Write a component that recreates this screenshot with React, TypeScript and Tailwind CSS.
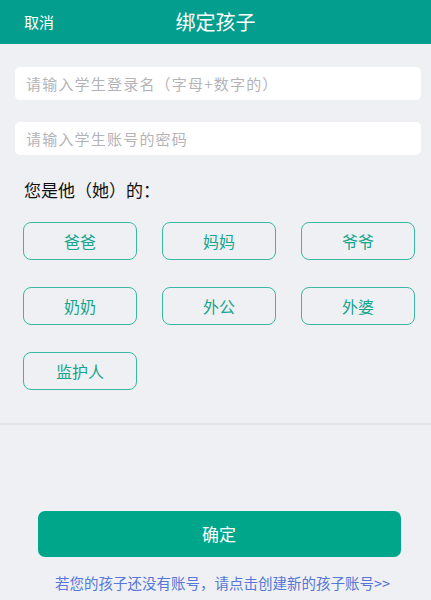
import React, { useState } from 'react';

const relations = ['爸爸', '妈妈', '爷爷', '奶奶', '外公', '外婆', '监护人'];

const App: React.FC = () => {
  const [picked, setPicked] = useState<string | null>(null);

  return (
    <div
      className="w-[431px] h-[600px] overflow-hidden bg-[#eef0f4] flex flex-col"
      style={{ fontFamily: '"Noto Sans CJK SC", "Noto Sans", sans-serif' }}
    >
      <div className="h-[44px] shrink-0 bg-[#049e8e] flex items-center relative">
        <button className="pl-[24px] text-[15px] text-white">取消</button>
        <div className="absolute left-0 right-0 text-center text-[20px] text-white pointer-events-none">绑定孩子</div>
      </div>

      <div className="pl-[15px] pr-[10px] pt-[23px] flex flex-col gap-[22px]">
        <input
          placeholder="请输入学生登录名（字母+数字的）"
          className="h-[33px] rounded-[5px] bg-white px-[11px] text-[15px] tracking-[1.2px] placeholder:text-[#b4b4b8] outline-none"
        />
        <input
          type="password"
          placeholder="请输入学生账号的密码"
          className="h-[33px] rounded-[5px] bg-white px-[11px] text-[15px] tracking-[1.2px] placeholder:text-[#b4b4b8] outline-none"
        />
      </div>

      <div className="pl-[24px] mt-[23px] text-[17px] text-[#111] leading-[24px]">您是他（她）的：</div>

      <div className="pl-[23px] mt-[20px] grid grid-cols-[114px_114px_114px] gap-x-[25px] gap-y-[27px]">
        {relations.map(r => (
          <button
            key={r}
            onClick={() => setPicked(r)}
            className={`h-[38px] rounded-[8px] border-[1.5px] border-[#3bb8a2] text-[16px] ${
              picked === r ? 'bg-[#3bb8a2] text-white' : 'text-[#14a58c]'
            }`}
          >
            {r}
          </button>
        ))}
      </div>

      <div className="mt-[33px] h-[2px] bg-[#e2e3e7]" />

      <div className="flex-1 flex flex-col items-center">
        <button className="mt-[86px] w-[363px] h-[46px] rounded-[7px] bg-[#00a68a] text-white text-[17px] ml-[7px]">
          确定
        </button>
        <a className="mt-[16px] ml-[14px] text-[14.5px] text-[#5577d8] leading-[20px]">
          若您的孩子还没有账号，请点击创建新的孩子账号&gt;&gt;
        </a>
      </div>
    </div>
  );
};

export default App;
